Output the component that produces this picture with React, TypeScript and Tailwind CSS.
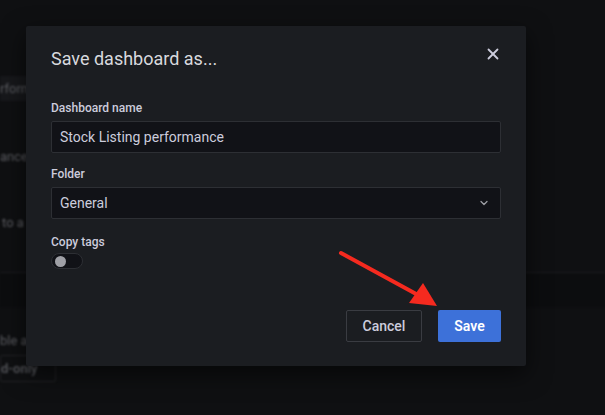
import { X, ChevronDown } from 'lucide-react';

function Field({ label, children }: { label: string; children: React.ReactNode }) {
  return (
    <div className="flex flex-col">
      <label className="text-[12px] leading-[16px] font-medium text-[#ccccdc] mb-[5px]">{label}</label>
      {children}
    </div>
  );
}

export default function App() {
  return (
    <div
      className="relative w-[605px] h-[415px] overflow-hidden bg-[#0f1012]"
      style={{ fontFamily: 'Roboto, "Liberation Sans", sans-serif' }}
    >
      {/* Page behind the backdrop */}
      <div className="flex flex-col pt-[76px] blur-[1px] text-[13px] text-[#5c5d62] select-none">
        <div className="h-[25px] w-[60px] bg-[#17181b] flex items-center">
          <span>rformance</span>
        </div>
        <div className="h-[44px]" />
        <div className="h-[24px] flex items-center">ance</div>
        <div className="h-[42px]" />
        <div className="h-[24px] flex items-center pl-[2px]">to a</div>
        <div className="h-[38px] border-b border-[#1b1c20]" />
        <div className="h-[34px] bg-[#0c0d0f]" />
        <div className="h-[22px]" />
        <div className="h-[24px] flex items-center">ble a</div>
        <div className="mt-[2px] h-[27px] w-[56px] border border-[#232428] rounded-[2px] flex items-center font-semibold text-[#55565b]">
          d-only
        </div>
      </div>

      {/* Modal */}
      <div className="absolute left-[26px] top-[26px] w-[500px] h-[340px] bg-[#1b1d21] rounded-[2px] shadow-[0_8px_24px_rgba(0,0,0,0.6)] flex flex-col px-[25px] pt-[21px]">
        <div className="flex items-start justify-between">
          <h2 className="text-[18px] leading-[24px] font-normal text-[#d8d9de]">Save dashboard as...</h2>
          <button className="mt-[-2px] mr-[-1px] text-[#ccccdc]">
            <X size={18} strokeWidth={2.4} />
          </button>
        </div>

        <div className="mt-[29px] flex flex-col gap-[13px]">
          <Field label="Dashboard name">
            <div className="h-[32px] rounded-[2px] border border-[#2d2f34] bg-[#111217] flex items-center px-[8px] text-[14px] text-[#ccccdc]">
              Stock Listing performance
            </div>
          </Field>
          <Field label="Folder">
            <div className="h-[32px] rounded-[2px] border border-[#2d2f34] bg-[#111217] flex items-center justify-between pl-[8px] pr-[10px] text-[14px] text-[#ccccdc]">
              <span>General</span>
              <ChevronDown size={12} strokeWidth={2.5} className="text-[#9fa0a6]" />
            </div>
          </Field>
          <div className="mt-[2px] flex flex-col">
            <label className="text-[12px] leading-[16px] font-medium text-[#ccccdc] mb-[3px]">Copy tags</label>
            <div className="w-[32px] h-[16px] rounded-full border border-[#2d2f34] bg-[#111217] flex items-center pl-[3px]">
              <div className="w-[11px] h-[11px] rounded-full bg-[#9fa0a6]" />
            </div>
          </div>
        </div>

        <div className="mt-[41px] flex justify-end gap-[16px]">
          <button className="h-[32px] w-[76px] rounded-[2px] border border-[#3a3c42] text-[14px] font-medium text-[#ccccdc]">
            Cancel
          </button>
          <button className="h-[32px] w-[63px] rounded-[2px] bg-[#3d71d9] text-[14px] font-semibold text-white">
            Save
          </button>
        </div>
      </div>

      {/* Red annotation arrow */}
      <svg className="absolute left-0 top-0" width="605" height="415" viewBox="0 0 605 415">
        <line x1="341" y1="253" x2="418" y2="295" stroke="#f52a1f" strokeWidth="4" strokeLinecap="round" />
        <polygon points="437,306 409,303 423,283" fill="#f52a1f" />
      </svg>
    </div>
  );
}
